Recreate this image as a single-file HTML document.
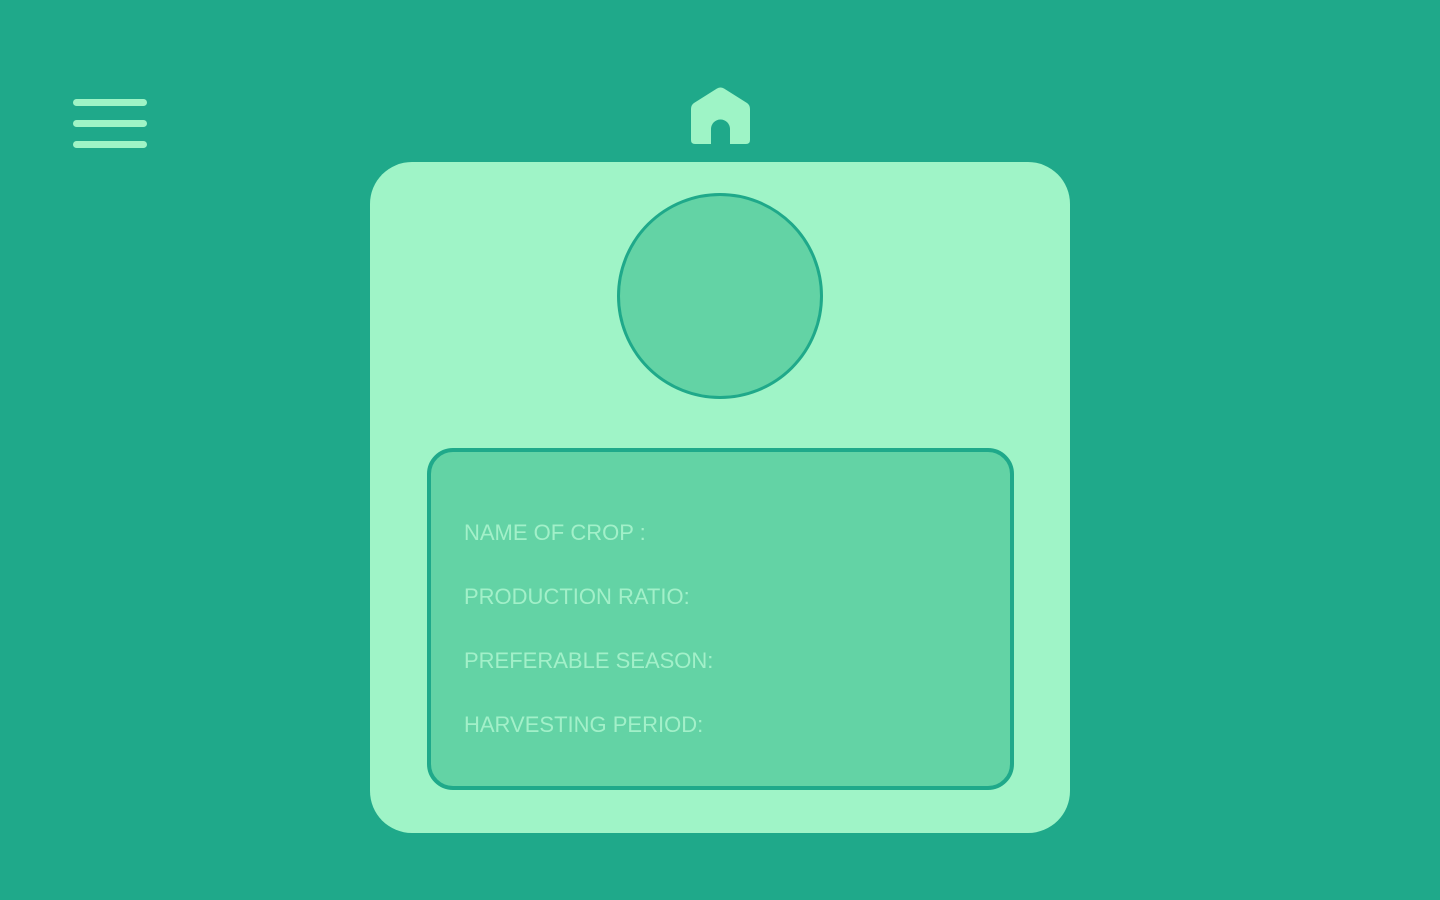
<!DOCTYPE html>
<html><head><meta charset="utf-8"><style>
html,body{margin:0;padding:0;width:1440px;height:900px;background:#1fa98a;overflow:hidden;font-family:"Liberation Sans",sans-serif}
.bar{position:absolute;left:73px;width:74px;height:7px;border-radius:4px;background:#9ef4c6}
.card{position:absolute;left:370px;top:162px;width:700px;height:671px;background:#9ff4c7;border-radius:42px}
.circle{position:absolute;left:617px;top:193px;width:200px;height:200px;border-radius:50%;background:#63d3a5;border:3px solid #1fa98a}
.box{position:absolute;left:427px;top:448px;width:579px;height:334px;border:4px solid #1fa98a;border-radius:26px;background:#63d3a5}
.t{position:absolute;left:464px;font-size:22px;color:#a2f0c9;letter-spacing:0}
</style></head><body>
<div class="bar" style="top:99px"></div>
<div class="bar" style="top:120px"></div>
<div class="bar" style="top:141px"></div>
<svg style="position:absolute;left:690px;top:86px" width="61" height="59" viewBox="0 0 61 59">
<path d="M4 17 L27 2.5 Q30.5 0.5 34 2.5 L57 17 Q60 19 60 23 L60 54 Q60 58 56 58 L40 58 L40 43 A9.5 9.5 0 0 0 21 43 L21 58 L5 58 Q1 58 1 54 L1 23 Q1 19 4 17 Z" fill="#9ef4c6"/>
</svg>
<div class="card"></div>
<div class="circle"></div>
<div class="box"></div>
<div class="t" style="top:520px">NAME OF CROP :</div>
<div class="t" style="top:584px">PRODUCTION RATIO:</div>
<div class="t" style="top:648px">PREFERABLE SEASON:</div>
<div class="t" style="top:712px">HARVESTING PERIOD:</div>
</body></html>
